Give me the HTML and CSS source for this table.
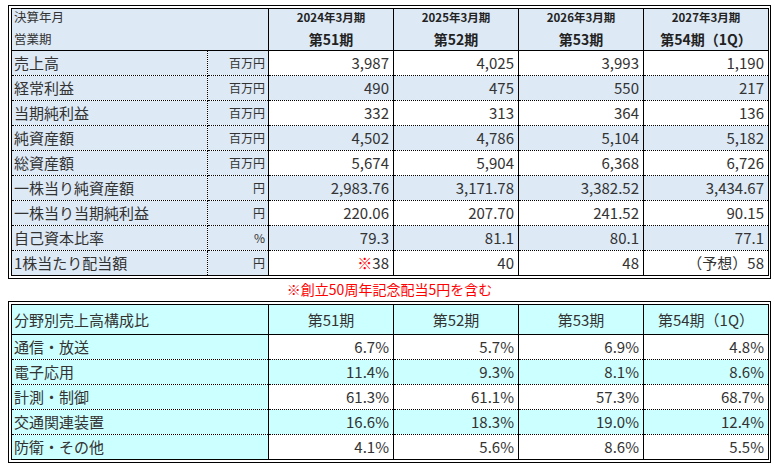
FILE: index.html
```html
<!DOCTYPE html>
<html lang="ja">
<head>
<meta charset="utf-8">
<title>業績推移</title>
<link rel="stylesheet" href="styles.css">
</head>
<body>
<div class="frame">
  <table class="tbl fin">
    <colgroup>
      <col class="c-label"><col class="c-unit"><col class="c-data"><col class="c-data"><col class="c-data"><col class="c-data">
    </colgroup>
    <thead>
      <tr class="head">
        <th class="corner" colspan="2"><div class="l1">決算年月</div><div class="l2">営業期</div></th>
        <th class="period"><div class="l1 fy">2024年3月期</div><div class="l2 term">第51期</div></th>
        <th class="period"><div class="l1 fy">2025年3月期</div><div class="l2 term">第52期</div></th>
        <th class="period"><div class="l1 fy">2026年3月期</div><div class="l2 term">第53期</div></th>
        <th class="period"><div class="l1 fy">2027年3月期</div><div class="l2 term">第54期（1Q）</div></th>
      </tr>
    </thead>
    <tbody>
      <tr class="row"><th class="label">売上高</th><td class="unit">百万円</td><td>3,987</td><td>4,025</td><td>3,993</td><td>1,190</td></tr>
      <tr class="row alt"><th class="label">経常利益</th><td class="unit">百万円</td><td>490</td><td>475</td><td>550</td><td>217</td></tr>
      <tr class="row"><th class="label">当期純利益</th><td class="unit">百万円</td><td>332</td><td>313</td><td>364</td><td>136</td></tr>
      <tr class="row alt"><th class="label">純資産額</th><td class="unit">百万円</td><td>4,502</td><td>4,786</td><td>5,104</td><td>5,182</td></tr>
      <tr class="row"><th class="label">総資産額</th><td class="unit">百万円</td><td>5,674</td><td>5,904</td><td>6,368</td><td>6,726</td></tr>
      <tr class="row alt"><th class="label">一株当り純資産額</th><td class="unit">円</td><td>2,983.76</td><td>3,171.78</td><td>3,382.52</td><td>3,434.67</td></tr>
      <tr class="row"><th class="label">一株当り当期純利益</th><td class="unit">円</td><td>220.06</td><td>207.70</td><td>241.52</td><td>90.15</td></tr>
      <tr class="row alt"><th class="label">自己資本比率</th><td class="unit">%</td><td>79.3</td><td>81.1</td><td>80.1</td><td>77.1</td></tr>
      <tr class="row"><th class="label">1株当たり配当額</th><td class="unit">円</td><td><span class="mark">※</span>38</td><td>40</td><td>48</td><td>（予想）58</td></tr>
    </tbody>
  </table>
</div>
<p class="note">※創立50周年記念配当5円を含む</p>
<div class="frame">
  <table class="tbl mix">
    <colgroup>
      <col class="c-name"><col class="c-data"><col class="c-data"><col class="c-data"><col class="c-data">
    </colgroup>
    <thead>
      <tr class="head2">
        <th class="label">分野別売上高構成比</th>
        <th class="period2">第51期</th>
        <th class="period2">第52期</th>
        <th class="period2">第53期</th>
        <th class="period2">第54期（1Q）</th>
      </tr>
    </thead>
    <tbody>
      <tr class="row"><th class="label">通信・放送</th><td>6.7%</td><td>5.7%</td><td>6.9%</td><td>4.8%</td></tr>
      <tr class="row alt"><th class="label">電子応用</th><td>11.4%</td><td>9.3%</td><td>8.1%</td><td>8.6%</td></tr>
      <tr class="row"><th class="label">計測・制御</th><td>61.3%</td><td>61.1%</td><td>57.3%</td><td>68.7%</td></tr>
      <tr class="row alt"><th class="label">交通関連装置</th><td>16.6%</td><td>18.3%</td><td>19.0%</td><td>12.4%</td></tr>
      <tr class="row"><th class="label">防衛・その他</th><td>4.1%</td><td>5.6%</td><td>8.6%</td><td>5.5%</td></tr>
    </tbody>
  </table>
</div>
</body>
</html>
```

FILE: styles.css
```css
html, body {
  background: #ffffff;
}
body {
  margin: 5px 4px 0 8px;
  font-family: "Noto Sans CJK JP", "Noto Sans", sans-serif;
  color: #333333;
}
.frame {
  width: 763px;
  box-sizing: border-box;
  border: 1px solid #000;
  padding: 2px;
}
.tbl {
  border-collapse: collapse;
  table-layout: fixed;
  width: 757px;
  border: 1px solid #000;
}
.c-label { width: 196px; }
.c-unit { width: 61px; }
.c-name { width: 257px; }
.c-data { width: 125px; }

.tbl th, .tbl td {
  border: 1px solid #000;
  border-top-style: dotted;
  border-bottom-style: dotted;
  padding: 0 4px 0 2px;
  font-size: 15px;
  line-height: 22px;
  text-align: right;
  font-weight: normal;
  white-space: nowrap;
  overflow: hidden;
}
.tbl thead th {
  border-bottom-style: solid;
}
.row {
  height: 25px;
}
.tbl .label {
  text-align: left;
  padding-left: 2px;
}
.fin .label {
  border-right-style: dotted;
}
.tbl .unit {
  border-left-style: dotted;
  font-size: 12px;
  padding-right: 3px;
}

/* top table colours */
.fin thead th,
.fin .label,
.fin .unit,
.fin .alt td {
  background: #dde9f5;
}
/* bottom table colours */
.mix thead th,
.mix .label,
.mix .alt td {
  background: #ccffff;
}

.tbl .head th {
  height: 41px;
  padding: 0;
  vertical-align: top;
}
.head .l1 {
  height: 16px;
  line-height: 16px;
}
.head .l2 {
  margin-top: 3px;
  height: 22px;
  line-height: 22px;
}
.tbl .corner {
  text-align: left;
  font-size: 12.5px;
}
.corner .l1, .corner .l2 {
  padding-left: 2px;
}
.tbl .period {
  text-align: center;
  color: #222;
}
.tbl .period .fy {
  font-size: 11.5px;
  font-weight: bold;
}
.tbl .period .term {
  font-size: 14px;
  font-weight: bold;
}
.tbl .head2 th {
  height: 29px;
}
.tbl .period2 {
  text-align: center;
  padding: 0;
}
.mark {
  color: #ff0000;
}
.note {
  margin: 2px 0 3px;
  width: 763px;
  text-align: center;
  color: #ff0000;
  font-size: 14px;
  line-height: 17px;
}
```
